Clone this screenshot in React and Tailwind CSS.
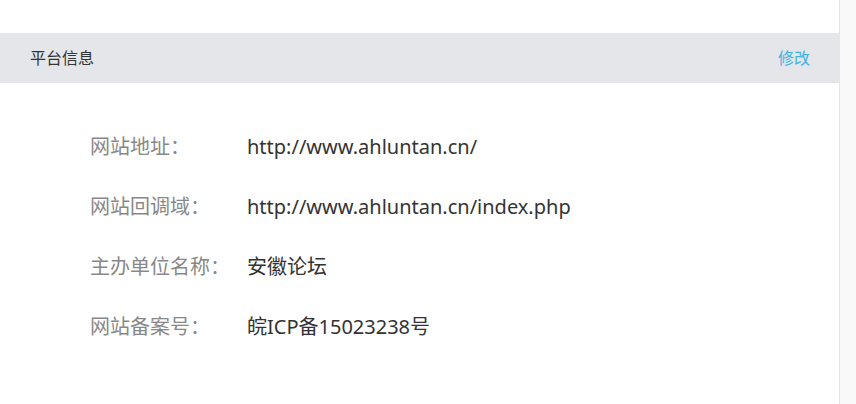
export default function App() {
  const rows = [
    ["网站地址：", "http://www.ahluntan.cn/"],
    ["网站回调域：", "http://www.ahluntan.cn/index.php"],
    ["主办单位名称：", "安徽论坛"],
    ["网站备案号：", "皖ICP备15023238号"],
  ];
  return (
    <div
      className="flex w-[856px] h-[404px] overflow-hidden"
      style={{ fontFamily: '"Noto Sans", "Noto Sans CJK SC", sans-serif' }}
    >
      <div className="w-[840px] h-full bg-white border-r border-[#e6e6e6] flex flex-col">
        <div className="h-[33px]" />
        <div className="h-[50px] bg-[#e4e6e9] flex items-center justify-between px-[30px]">
          <span className="text-[16px] text-[#333]">平台信息</span>
          <span className="text-[16px] text-[#41b2e6] mr-[-1px]">修改</span>
        </div>
        <div className="pt-[34px] pl-[90px] flex flex-col">
          {rows.map(([k, v]) => (
            <div key={k} className="h-[60px] flex items-center">
              <span className="w-[157px] text-[20px] text-[#888]">{k}</span>
              <span className="text-[20px] text-[#333]">{v}</span>
            </div>
          ))}
        </div>
      </div>
      <div className="flex-1 bg-[#f9f9f9]" />
    </div>
  );
}
